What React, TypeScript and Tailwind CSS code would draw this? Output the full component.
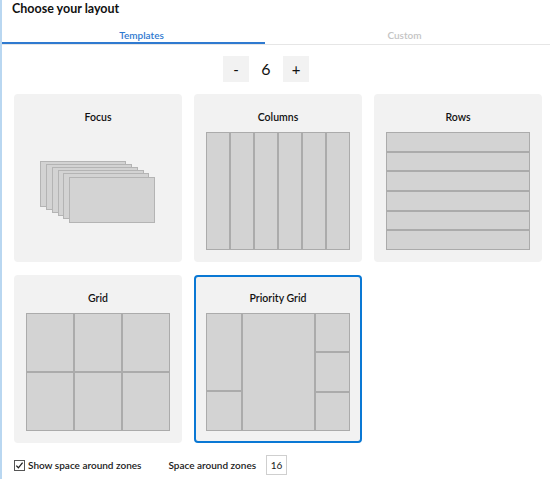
import React from "react";

const zone = "bg-[#d3d3d3] border border-[#ababab]";

function Card({ title, selected, children }: { title: string; selected?: boolean; children: React.ReactNode }) {
  return (
    <div
      className={
        "h-[168px] rounded-[4px] bg-[#f2f2f2] flex flex-col items-center " +
        (selected ? "border-2 border-[#0a78d4] pt-[14px]" : "pt-[16px]")
      }
    >
      <div className="h-[14px] leading-[14px] text-[10.5px] font-semibold text-[#111]">{title}</div>
      <div className="mt-[8px] w-[144px] h-[118px]">{children}</div>
    </div>
  );
}

function FocusPreview() {
  const cls = "absolute w-[86px] h-[46px] bg-[#d3d3d3] border border-[#b4b4b4]";
  return (
    <div className="relative w-full h-full">
      <div className={cls + " left-[14px] top-[29px]"} />
      <div className={cls + " left-[20px] top-[32px]"} />
      <div className={cls + " left-[26px] top-[35px]"} />
      <div className={cls + " left-[32px] top-[38px]"} />
      <div className={cls + " left-[37px] top-[41px]"} />
      <div className={cls + " left-[43px] top-[45px]"} />
    </div>
  );
}

function ColumnsPreview() {
  return (
    <div className="flex w-full h-full">
      {[0, 1, 2, 3, 4, 5].map((i) => (
        <div key={i} className={"flex-1 " + zone} />
      ))}
    </div>
  );
}

function RowsPreview() {
  return (
    <div className="flex flex-col w-full h-full">
      {[0, 1, 2, 3, 4, 5].map((i) => (
        <div key={i} className={"flex-1 " + zone} />
      ))}
    </div>
  );
}

function GridPreview() {
  return (
    <div className="grid grid-cols-3 grid-rows-2 w-full h-full">
      {[0, 1, 2, 3, 4, 5].map((i) => (
        <div key={i} className={zone} />
      ))}
    </div>
  );
}

function PriorityPreview() {
  return (
    <div className="flex w-full h-full">
      <div className="flex-1 flex flex-col">
        <div className={"flex-[2] " + zone} />
        <div className={"flex-1 " + zone} />
      </div>
      <div className={"flex-[2] " + zone} />
      <div className="flex-1 flex flex-col">
        <div className={"flex-1 " + zone} />
        <div className={"flex-1 " + zone} />
        <div className={"flex-1 " + zone} />
      </div>
    </div>
  );
}

export default function App() {
  return (
    <div
      className="w-[550px] h-[479px] bg-white border-l-2 border-[#b9d7f1] overflow-hidden text-[#111]"
      style={{ fontFamily: 'Lato, "Open Sans", sans-serif' }}
    >
      <div className="pl-[10px] pt-[1px] h-[27px] text-[12.5px] font-bold leading-[15px]">Choose your layout</div>
      <div className="border-b border-[#e6e6e6]">
        <div className="flex w-[528px]">
          <div className="w-[263px] h-[17px] flex justify-center pl-[16px] text-[10px] font-semibold text-[#2f7ad0] leading-[17px] border-b-2 border-[#2f7ad0] -mb-px">
            Templates
          </div>
          <div className="flex-1 h-[17px] flex justify-center pl-[14px] text-[10px] font-semibold text-[#c4c4c4] leading-[17px]">
            Custom
          </div>
        </div>
      </div>
      <div className="w-[528px] flex justify-center items-center mt-[11px] h-[26px]">
        <div className="w-[26px] h-[26px] bg-[#f2f2f2] flex items-center justify-center text-[15px] leading-none">-</div>
        <div className="w-[34px] text-center text-[16px] leading-none">6</div>
        <div className="w-[26px] h-[26px] bg-[#f2f2f2] flex items-center justify-center text-[15px] leading-none">+</div>
      </div>
      <div className="grid grid-cols-[168px_168px_168px] gap-x-3 gap-y-[13px] pl-[12px] mt-[12px]">
        <Card title="Focus">
          <FocusPreview />
        </Card>
        <Card title="Columns">
          <ColumnsPreview />
        </Card>
        <Card title="Rows">
          <RowsPreview />
        </Card>
        <Card title="Grid">
          <GridPreview />
        </Card>
        <Card title="Priority Grid" selected>
          <PriorityPreview />
        </Card>
      </div>
      <div className="flex items-center mt-[12px] pl-[12px] h-[20px] text-[10px] font-semibold text-[#1a1a1a]">
        <svg width="11" height="11" viewBox="0 0 11 11" className="mr-[3px]">
          <rect x="0.5" y="0.5" width="10" height="10" fill="white" stroke="#555" />
          <path d="M2.3 5.6 L4.4 7.8 L8.6 2.6" fill="none" stroke="#222" strokeWidth="1.3" />
        </svg>
        <span>Show space around zones</span>
        <span className="ml-[27px]">Space around zones</span>
        <div className="ml-[10px] w-[21px] h-[20px] border border-[#cfcfcf] flex items-center justify-center font-normal">16</div>
      </div>
    </div>
  );
}
